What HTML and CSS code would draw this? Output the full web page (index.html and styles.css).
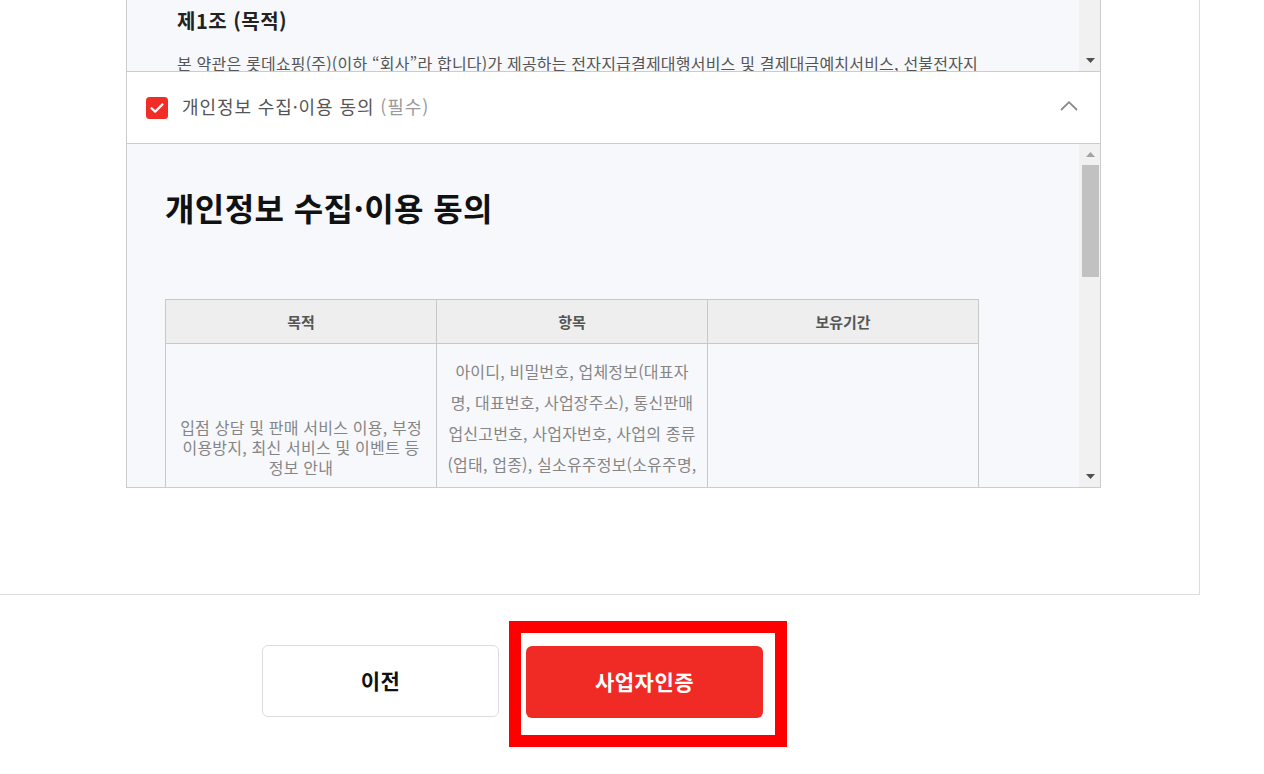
FILE: index.html
```html
<!DOCTYPE html>
<html lang="ko">
<head>
<meta charset="utf-8">
<title>사업자인증 - 약관 동의</title>
<link rel="stylesheet" href="styles.css">
</head>
<body>
<div class="page">
  <div class="panel">
    <div class="agree">
      <div class="terms terms-top">
        <div class="terms-body terms-body-top">
          <h3 class="article-title">제1조 (목적)</h3>
          <p class="article-text">본 약관은 롯데쇼핑(주)(이하 “회사”라 합니다)가 제공하는 전자지급결제대행서비스 및 결제대금예치서비스, 선불전자지</p>
        </div>
        <div class="sb">
          <div class="sb-fill"></div>
          <div class="sb-btn"><svg width="9" height="5" viewBox="0 0 9 5"><path d="M0 0H9L4.5 5Z" fill="#505050"/></svg></div>
        </div>
      </div>

      <div class="agree-head">
        <span class="check"><svg width="22" height="22" viewBox="0 0 22 22"><rect width="22" height="22" rx="3.5" fill="#f02d27"/><path d="M5.5 11.2L9.2 14.6L16.5 7.4" fill="none" stroke="#fff" stroke-width="2.2" stroke-linecap="round" stroke-linejoin="round"/></svg></span>
        <span class="agree-label">개인정보 수집·이용 동의 <span class="req">(필수)</span></span>
        <span class="chevron"><svg width="18" height="10" viewBox="0 0 18 10"><path d="M1 9L9 1.2L17 9" fill="none" stroke="#8a8a8a" stroke-width="1.8"/></svg></span>
      </div>

      <div class="terms terms-main">
        <div class="terms-body terms-body-main">
          <h2 class="doc-title">개인정보 수집·이용 동의</h2>
          <table class="info-table">
            <colgroup><col class="col"><col class="col"><col class="col"></colgroup>
            <thead>
              <tr><th>목적</th><th>항목</th><th>보유기간</th></tr>
            </thead>
            <tbody>
              <tr>
                <td class="c1">입점 상담 및 판매 서비스 이용, 부정<br>이용방지, 최신 서비스 및 이벤트 등<br>정보 안내</td>
                <td class="c2">아이디, 비밀번호, 업체정보(대표자<br>명, 대표번호, 사업장주소), 통신판매<br>업신고번호, 사업자번호, 사업의 종류<br>(업태, 업종), 실소유주정보(소유주명,<br>생년월일, 연락처), 정산정보(은행명,<br>계좌번호, 예금주명)</td>
                <td class="c3"></td>
              </tr>
            </tbody>
          </table>
        </div>
        <div class="sb">
          <div class="sb-btn"><svg width="9" height="5" viewBox="0 0 9 5"><path d="M0 5H9L4.5 0Z" fill="#a3a3a3"/></svg></div>
          <div class="sb-thumb"></div>
          <div class="sb-fill"></div>
          <div class="sb-btn"><svg width="9" height="5" viewBox="0 0 9 5"><path d="M0 0H9L4.5 5Z" fill="#505050"/></svg></div>
        </div>
      </div>
    </div>
  </div>

  <div class="actions">
    <button class="btn btn-prev" type="button">이전</button>
    <div class="btn-wrap">
      <button class="btn btn-primary" type="button">사업자인증</button>
      <span class="highlight"></span>
    </div>
  </div>
</div>
</body>
</html>
```

FILE: styles.css
```css
* { box-sizing: border-box; }

html, body {
  margin: 0;
  padding: 0;
  background: #fff;
}

body {
  font-family: "Noto Sans CJK KR", "Noto Sans", sans-serif;
  color: #333;
}

.page {
  min-height: 774px;
}

.panel {
  width: 1200px;
  border-right: 1px solid #ddd;
  border-bottom: 1px solid #ddd;
  padding: 0 98px 106px 126px;
}

.agree {
  width: 975px;
  border: 1px solid #ccc;
  border-top: none;
}

.terms {
  display: flex;
  background: #f7f8fc;
  overflow: hidden;
}

.terms-top { height: 71px; }
.terms-main { height: 343px; }

.terms-body {
  flex: 1;
  min-width: 0;
  overflow: hidden;
}

.terms-body-top {
  padding: 6px 0 0 50px;
}

.article-title {
  margin: 0;
  font-size: 20px;
  font-weight: bold;
  color: #222;
  line-height: 29px;
  letter-spacing: 0.5px;
}

.article-text {
  margin: 17px 0 0;
  font-size: 16px;
  color: #555;
  line-height: 22px;
  letter-spacing: 0.2px;
  white-space: nowrap;
}

.agree-head {
  display: flex;
  align-items: center;
  height: 73px;
  border-top: 1px solid #ccc;
  border-bottom: 1px solid #ccc;
  background: #fff;
  padding: 1px 22px 0 19px;
}

.check {
  display: flex;
  width: 22px;
  height: 22px;
}

.agree-label {
  margin-left: 14px;
  font-size: 18px;
  color: #555;
  line-height: 26px;
  letter-spacing: 0.9px;
  padding-bottom: 4px;
}

.req { color: #9a9a9a; }

.chevron {
  margin-left: auto;
  display: flex;
  padding-bottom: 4px;
}

.terms-body-main {
  padding: 40px 0 0 38px;
}

.doc-title {
  margin: 0 0 69px;
  font-size: 32px;
  font-weight: bold;
  color: #111;
  line-height: 46px;
  letter-spacing: 0.4px;
}

.info-table {
  width: 814px;
  border-collapse: collapse;
  table-layout: fixed;
}

.info-table .col { width: 33.333%; }

.info-table th {
  height: 44px;
  padding: 0;
  background: #eee;
  border: 1px solid #c8c8c8;
  color: #555;
  font-size: 15px;
  font-weight: bold;
  text-align: center;
  vertical-align: middle;
}

.info-table td {
  border: 1px solid #c8c8c8;
  color: #858585;
  font-size: 16px;
  letter-spacing: 0.2px;
  text-align: center;
  vertical-align: middle;
  white-space: nowrap;
}

.info-table .c1 {
  line-height: 20px;
  padding: 0 4px;
}

.info-table .c2 {
  line-height: 31px;
  padding: 12px 4px 8px;
}

.sb {
  width: 21px;
  flex: 0 0 21px;
  background: #f1f1f1;
  display: flex;
  flex-direction: column;
}

.sb-btn {
  height: 21px;
  flex: 0 0 21px;
  display: flex;
  align-items: center;
  justify-content: center;
  padding-left: 1px;
}

.sb-fill { flex: 1; }

.sb-thumb {
  height: 112px;
  flex: 0 0 112px;
  margin: 0 1px 0 3px;
  background: #c1c1c1;
}

.actions {
  display: flex;
  gap: 27px;
  padding: 50px 0 56px 262px;
}

.btn {
  width: 237px;
  height: 72px;
  border-radius: 6px;
  font-family: inherit;
  font-size: 21px;
  font-weight: bold;
  letter-spacing: 0.5px;
  display: flex;
  align-items: center;
  justify-content: center;
  padding: 0 0 3px;
  margin: 0;
  cursor: pointer;
}

.btn-prev {
  background: #fff;
  border: 1px solid #ddd;
  color: #111;
}

.btn-wrap {
  position: relative;
  display: flex;
  padding-top: 1px;
}

.btn-primary {
  background: #f02b25;
  border: none;
  color: #fff;
}

.highlight {
  position: absolute;
  left: -17px;
  top: -24px;
  width: 278px;
  height: 126px;
  border: 12px solid #ff0000;
  pointer-events: none;
}
```
